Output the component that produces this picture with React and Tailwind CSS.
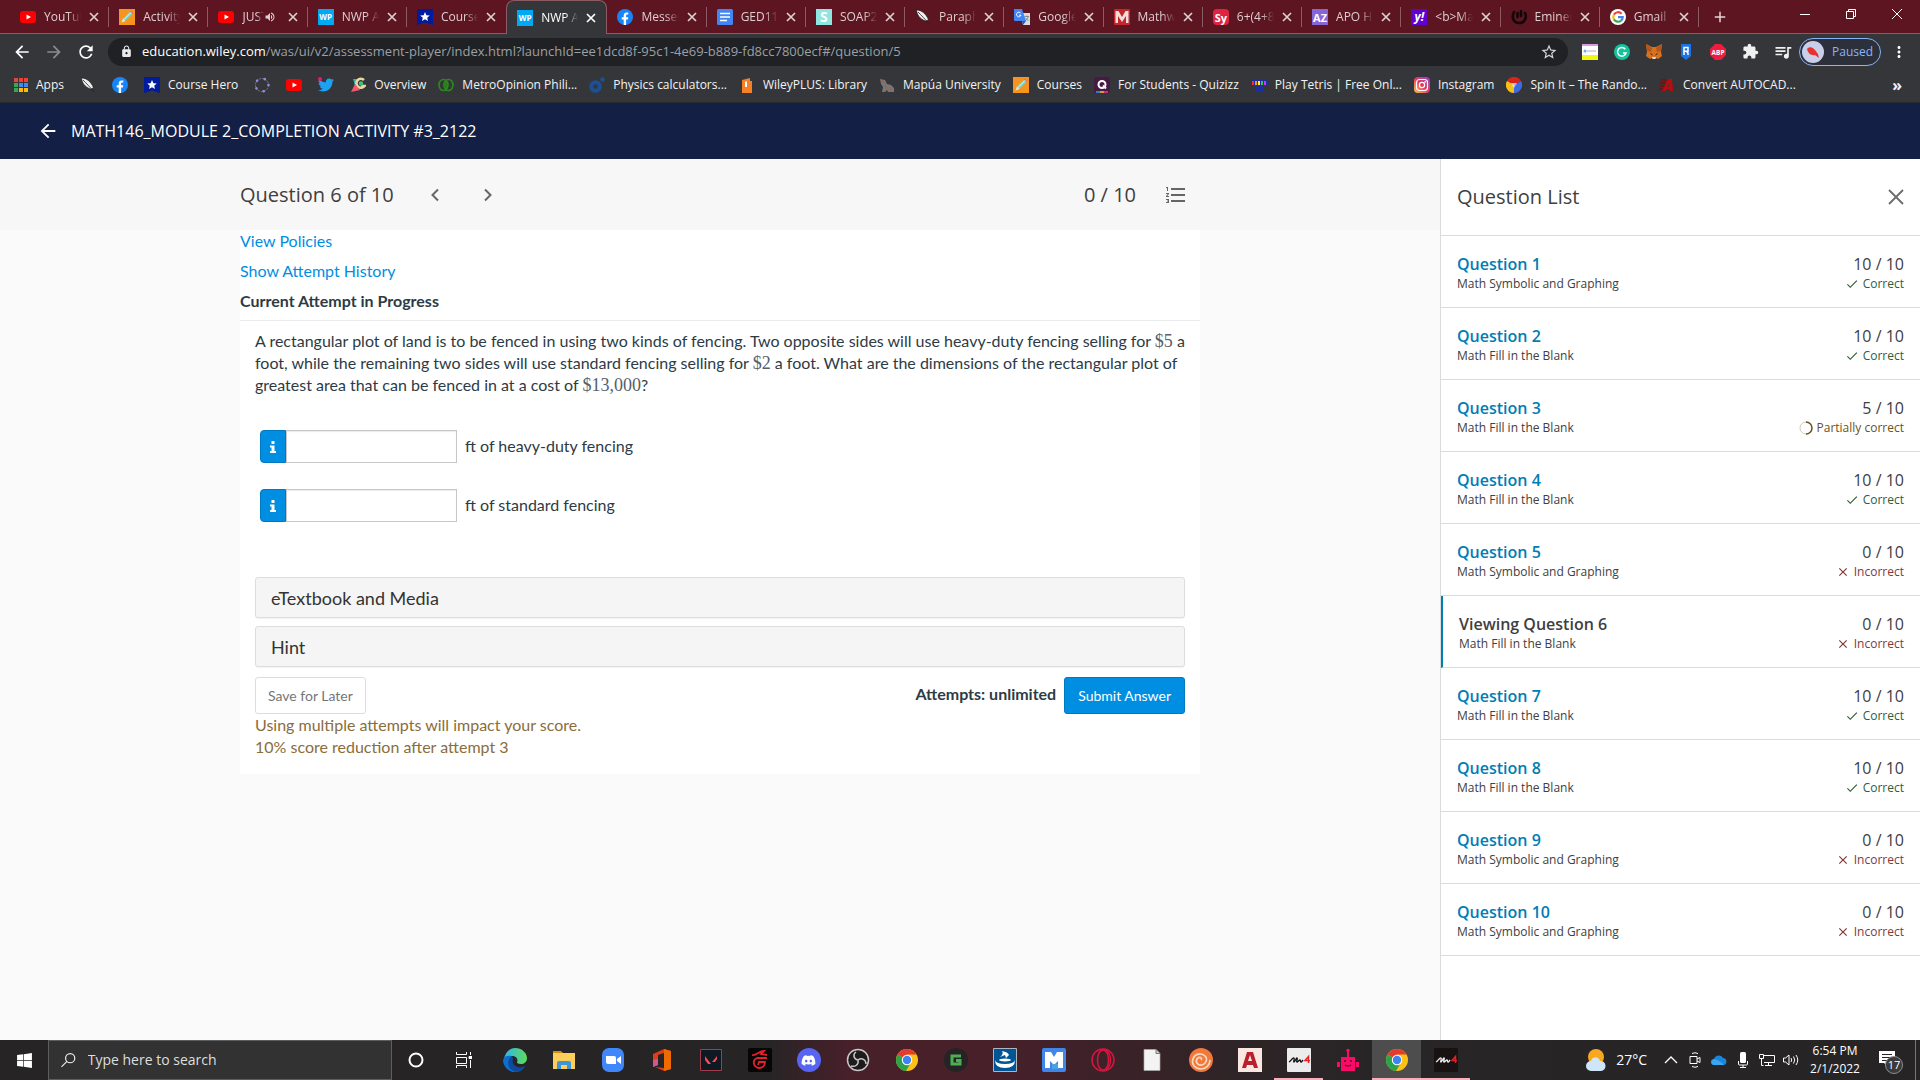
import clsx from 'clsx'
import {
  MdArrowBack, MdArrowForward, MdRefresh, MdLock, MdStarOutline, MdExtension, MdQueueMusic,
  MdMoreVert, MdClose, MdAdd, MdVolumeUp, MdFormatListNumbered, MdCheck, MdMic,
} from 'react-icons/md'
import { FaTwitter, FaDiscord, FaWindows } from 'react-icons/fa'

/* ---------- site logos ---------- */

function Tile({ className, children }) {
  return (
    <span className={clsx('w-4 h-4 flex items-center justify-center leading-none font-bold flex-shrink-0', className)}>
      {children}
    </span>
  )
}

const YouTube = () => (
  <svg viewBox="0 0 16 16" className="w-4 h-4 flex-shrink-0">
    <rect y="2" width="16" height="12" rx="3" fill="#f00" />
    <path d="M6.500 5.500 11 8l-4.500 2.500z" fill="#fff" />
  </svg>
)

const Pencil = () => (
  <svg viewBox="0 0 16 16" className="w-4 h-4 flex-shrink-0">
    <rect width="16" height="16" fill="#f7941d" />
    <path d="M2.500 13.500 4 9.500 11 2.500l2.500 2.500-7 7z" fill="#6fd6cf" />
    <path d="m11 2.500 1-1 2.500 2.500-1 1z" fill="#f4667f" />
    <path d="M2.500 13.500 4 9.500l2.500 2.500z" fill="#fbe3b5" />
    <path d="m5 10.500 7-7" stroke="#d7fbf3" />
  </svg>
)

const CourseHero = () => (
  <svg viewBox="0 0 16 16" className="w-4 h-4 flex-shrink-0">
    <path d="M0 0h16v16l-8-2.500L0 16z" fill="#001c9c" />
    <path d="m8 3 1.400 3.200 3.400.3-2.600 2.200.8 3.300L8 10.200 5 12l.8-3.300-2.600-2.200 3.400-.3z" fill="#fff" />
  </svg>
)

const Facebook = () => (
  <svg viewBox="0 0 16 16" className="w-4 h-4 flex-shrink-0">
    <circle cx="8" cy="8" r="8" fill="#1785f8" />
    <path d="M6.700 16v-5.500h-2V8.200h2V6.500c0-2 1.200-3.100 3-3.100.8 0 1.600.1 1.600.1v1.900h-1c-1 0-1.200.6-1.200 1.200v1.600h2.200l-.4 2.300H9.100V16z" fill="#fff" />
  </svg>
)

const Docs = () => (
  <svg viewBox="0 0 16 16" className="w-4 h-4 flex-shrink-0">
    <rect width="16" height="16" rx="1.500" fill="#4285f4" />
    <path d="M3 4.500h10M3 8h10M3 11.500h7" stroke="#fff" strokeWidth="1.600" />
  </svg>
)

const Quill = () => (
  <svg viewBox="0 0 16 16" className="w-4 h-4 flex-shrink-0">
    <path d="M1.500 1c5 0 10 4 12 10l-3 1C5 10 2 6 1.500 1z" fill="#f0f0f0" stroke="#111" strokeWidth=".6" />
    <path d="M3 3c3 3 7 7 11 12" stroke="#222" strokeWidth=".8" fill="none" />
  </svg>
)

const Translate = () => (
  <svg viewBox="0 0 16 16" className="w-4 h-4 flex-shrink-0">
    <path d="M6 4h10v12H9z" fill="#dcdcdc" />
    <path d="M0 0h8l4 12H1a1 1 0 0 1-1-1z" fill="#4285f4" />
    <path d="m8 12 4 0-3 4z" fill="#2a56c6" />
    <path d="M6.800 4.300A2.300 2.300 0 1 0 7 6.200H5" stroke="#fff" fill="none" />
    <path d="M10.500 7.500H15M13 6.500v1M14 8c-.5 2-1.500 3-3 4M11.500 9l3 3" stroke="#607d8b" strokeWidth=".8" fill="none" />
  </svg>
)

const Mathway = () => (
  <svg viewBox="0 0 16 16" className="w-4 h-4 flex-shrink-0">
    <rect width="16" height="16" rx="1" fill="#c4262c" />
    <path d="M1.500 14V2h3L8 8l3.500-6h3v12H12V7l-4 6-4-6v7z" fill="#f3dcdc" />
  </svg>
)

const Eminem = () => (
  <svg viewBox="0 0 16 16" className="w-4 h-4 flex-shrink-0">
    <path d="M3 3c-3 6 0 11 5 11 6 0 8-6 6-10M6.500 4v4M10 2v5" stroke="#120506" strokeWidth="2.600" fill="none" strokeLinecap="round" />
  </svg>
)

const Google = () => (
  <svg viewBox="0 0 16 16" className="w-4 h-4 flex-shrink-0">
    <circle cx="8" cy="8" r="8" fill="#fff" />
    <g fill="none" strokeWidth="2.200">
      <path d="M11.600 4.800A4.800 4.800 0 0 0 3.900 5.600" stroke="#ea4335" />
      <path d="M3.900 5.600a4.800 4.800 0 0 0 0 4.800" stroke="#fbbc05" />
      <path d="M3.900 10.400a4.800 4.800 0 0 0 7.200 1.200" stroke="#34a853" />
      <path d="M11.100 11.600A4.800 4.800 0 0 0 12.700 8.200H8" stroke="#4285f4" />
    </g>
  </svg>
)

const Apps = () => (
  <svg viewBox="0 0 14 14" className="w-[14px] h-[14px] flex-shrink-0">
    <path d="M0 0h4v4H0zM5 0h4v4H5zM10 0h4v4h-4z" fill="#ea4335" />
    <path d="M0 5h4v4H0zM0 10h4v4H0z" fill="#34a853" />
    <path d="M5 5h4v4H5zM10 5h4v4h-4z" fill="#4285f4" />
    <path d="M5 10h4v4H5zM10 10h4v4h-4z" fill="#fbbc05" />
  </svg>
)

const Dotted = () => (
  <svg viewBox="0 0 16 16" className="w-4 h-4 flex-shrink-0">
    <circle cx="8" cy="8" r="6.500" fill="none" stroke="#777" strokeWidth="1" strokeDasharray="2 1" />
    <circle cx="8" cy="8" r="6.500" fill="none" stroke="#8c8cf5" strokeWidth="2.600" strokeLinecap="round" strokeDasharray="0.100 8.070" />
  </svg>
)

const Twitter = () => (
  <span className="relative w-4 h-4 flex-shrink-0">
    <FaTwitter size={16} className="text-[#1da1f2]" />
    <span className="absolute left-0 top-0 w-1 h-1 rounded-full bg-[#f0146e]" />
  </span>
)

const Overview = () => (
  <svg viewBox="0 0 16 16" className="w-4 h-4 flex-shrink-0">
    <path d="M3 2h6L5 9z" fill="#2fb5a0" />
    <path d="M14 3a4.500 4.500 0 1 0 .5 6H11" fill="none" stroke="#e9d9a0" strokeWidth="2.600" />
    <path d="M1 15 5 7l5 6z" fill="#ef5a6c" />
    <circle cx="11" cy="6.500" r="2.200" fill="#3cc27e" />
  </svg>
)

const Metro = () => (
  <svg viewBox="0 0 16 16" className="w-4 h-4 flex-shrink-0" fill="none" stroke="#2c8a1c" strokeWidth="1.600">
    <ellipse cx="5.500" cy="8" rx="4.500" ry="5.500" />
    <ellipse cx="10.500" cy="8" rx="4.500" ry="5.500" />
    <path d="M8 4v8" />
  </svg>
)

const Physics = () => (
  <svg viewBox="0 0 16 16" className="w-4 h-4 flex-shrink-0">
    <circle cx="6.500" cy="9.500" r="4.300" fill="none" stroke="#1c4f94" strokeWidth="4" />
    <circle cx="13.500" cy="2.500" r="2.300" fill="#1c4f94" />
  </svg>
)

const Wiley = () => (
  <svg viewBox="0 0 16 16" className="w-4 h-4 flex-shrink-0">
    <path d="M3 3 11 1v3h2v12H3z" fill="#f58025" />
    <path d="M6 4.500h2V10H6z" fill="#fff" />
  </svg>
)

const Mapua = () => (
  <svg viewBox="0 0 16 16" className="w-4 h-4 flex-shrink-0">
    <path d="M1 2l5 1 2 4 4 1 3 3v4H9l-1-2-2 2H3l1-5-2-3z" fill="#777" />
    <path d="M3 3l2 3M6 8l3 5M11 10l2 4" stroke="#b8543a" />
  </svg>
)

const Quizizz = () => (
  <svg viewBox="0 0 16 16" className="w-4 h-4 flex-shrink-0">
    <rect width="16" height="16" rx="2" fill="#461a42" />
    <path d="M2 15h4" stroke="#2f9dff" strokeWidth="1.500" />
    <path d="M6 15h4" stroke="#ffc43a" strokeWidth="1.500" />
    <path d="M10 15h4" stroke="#ec3b83" strokeWidth="1.500" />
    <circle cx="8" cy="7.500" r="3.500" fill="none" stroke="#fff" strokeWidth="2" />
    <path d="m9 8.500 3 3" stroke="#fff" strokeWidth="2" />
  </svg>
)

const Tetris = () => (
  <svg viewBox="0 0 16 16" className="w-4 h-4 flex-shrink-0">
    <path d="M0 3h16v6h-4v5H4V9H0z" fill="#1d2f9c" />
    <path d="M2 4v4" stroke="#e33" strokeWidth="2" />
    <path d="M5 4v4" stroke="#f90" strokeWidth="2" />
    <path d="M8 4v4" stroke="#fe3" strokeWidth="2" />
    <path d="M11 4v4" stroke="#3c3" strokeWidth="2" />
    <path d="M14 4v4" stroke="#c3f" strokeWidth="2" />
  </svg>
)

const Instagram = () => (
  <span className="w-4 h-4 rounded bg-gradient-to-tr from-[#fdc04a] via-[#e5335f] to-[#8a3ac8] flex-shrink-0">
    <svg viewBox="0 0 16 16" className="w-4 h-4" fill="none" stroke="#fff" strokeWidth="1.200">
      <rect x="2.500" y="2.500" width="11" height="11" rx="3" />
      <circle cx="8" cy="8" r="2.600" />
      <circle cx="11.200" cy="4.800" r=".3" />
    </svg>
  </span>
)

const Spin = () => (
  <svg viewBox="0 0 16 16" className="w-4 h-4 flex-shrink-0">
    <path d="M8 8 1 4a8 8 0 0 1 14 0z" fill="#d9241c" />
    <path d="M8 8 15 4a8 8 0 0 1-7 12z" fill="#3b6ce0" />
    <path d="M8 8v8A8 8 0 0 1 1 4z" fill="#f6bf1b" />
    <path d="M5 6h6l-3 5z" fill="#fff" opacity=".6" />
  </svg>
)

const Autocad = () => (
  <svg viewBox="0 0 16 16" className="w-4 h-4 flex-shrink-0">
    <path d="M2 3h6M1 6h6M1 9h5M0 12h4" stroke="#6d1414" strokeWidth="2" />
    <path d="m3 14 6-12h4l1 12h-3.500l-.2-2H7.500l-1 2zm5.500-4.500H10L9.900 6z" fill="#b80d0d" />
  </svg>
)

const WileyTab = () => <Tile className="bg-[#00a9f4] text-white text-[8px] font-['Open_Sans']">WP</Tile>

/* ---------- chrome data ---------- */

const TABS = [
  { title: 'YouTube', icon: <YouTube /> },
  { title: 'Activity', icon: <Pencil /> },
  { title: 'JUST', icon: <YouTube />, audio: true },
  { title: 'NWP As', icon: <WileyTab /> },
  { title: 'Course', icon: <CourseHero /> },
  { title: 'NWP As', icon: <WileyTab />, active: true },
  { title: 'Messen', icon: <Facebook /> },
  { title: 'GED117', icon: <Docs /> },
  { title: 'SOAP2', icon: <Tile className="bg-[#8fe6e1] text-white text-[14px]">S</Tile> },
  { title: 'Paraphr', icon: <Quill /> },
  { title: 'Google', icon: <Translate /> },
  { title: 'Mathwa', icon: <Mathway /> },
  { title: '6+(4+8', icon: <Tile className="bg-[#df2340] text-white text-[11px] rounded-sm">Sy</Tile> },
  { title: 'APO Ho', icon: <Tile className="bg-[#8765d8] text-white text-[11px]">AZ</Tile> },
  { title: '<b>Ma', icon: <Tile className="bg-[#5f01d1] text-white text-[12px] italic">y!</Tile> },
  { title: 'Eminem', icon: <Eminem /> },
  { title: 'Gmail', icon: <Google /> },
]

const BOOKMARKS = [
  { label: 'Apps', icon: <Apps /> },
  { icon: <Quill /> },
  { icon: <Facebook /> },
  { label: 'Course Hero', icon: <CourseHero /> },
  { icon: <Dotted /> },
  { icon: <YouTube /> },
  { icon: <Twitter /> },
  { label: 'Overview', icon: <Overview /> },
]

const MORE_BOOKMARKS = [
  { label: 'MetroOpinion Phili...', icon: <Metro /> },
  { label: 'Physics calculators...', icon: <Physics /> },
  { label: 'WileyPLUS: Library', icon: <Wiley /> },
  { label: 'Mapúa University', icon: <Mapua /> },
  { label: 'Courses', icon: <Pencil /> },
  { label: 'For Students - Quizizz', icon: <Quizizz /> },
  { label: 'Play Tetris | Free Onl...', icon: <Tetris /> },
  { label: 'Instagram', icon: <Instagram /> },
  { label: 'Spin It – The Rando...', icon: <Spin /> },
  { label: 'Convert AUTOCAD...', icon: <Autocad /> },
]

function TabStrip() {
  return (
    <div className="h-[34px] bg-[#5d1621] flex border-b border-[#8d5b62] pl-[10px] pr-3">
      <div className="flex-1 flex min-w-0">
        {TABS.map((tab, i) => (
          <div
            key={i}
            className={clsx(
              'flex-1 min-w-0 h-[34px] flex items-center px-[10px] relative',
              tab.active && 'bg-[#35363a] rounded-t-lg border border-b-0 border-[#8d5b62]',
            )}
          >
            {tab.icon}
            <span
              className={clsx(
                'ml-2 flex-1 min-w-0 overflow-hidden whitespace-nowrap text-xs [mask-image:linear-gradient(to_right,#000_65%,transparent)]',
                tab.active ? 'text-white' : 'text-[#dfcfd1]',
              )}
            >
              {tab.title}
            </span>
            {tab.audio && <MdVolumeUp size={12} className="mr-1 text-[#dfcfd1] flex-shrink-0" />}
            <button aria-label="Close tab" className={clsx('ml-2 flex-shrink-0', tab.active ? 'text-white' : 'text-[#dfcfd1]')}>
              <svg viewBox="0 0 10 10" className="w-[10px] h-[10px]">
                <path d="m1 1 8 8M9 1 1 9" stroke="currentColor" strokeWidth="1.700" />
              </svg>
            </button>
            {!tab.active && i !== 4 && <span className="absolute right-0 top-[7px] h-5 w-px bg-[#8d5b62]" />}
          </div>
        ))}
      </div>
      <button aria-label="New tab" className="w-[42px] flex items-center justify-center text-[#e3d3d5]"><MdAdd size={18} /></button>
      <div className="w-[167px] flex items-center justify-end gap-9 text-white h-7 pr-[6px]">
        <button aria-label="Minimize">
          <svg viewBox="0 0 10 10" className="w-[10px] h-[10px]"><path d="M0 5.500h10" stroke="currentColor" /></svg>
        </button>
        <button aria-label="Restore">
          <svg viewBox="0 0 10 10" className="w-[10px] h-[10px]" fill="none" stroke="currentColor">
            <path d="M.5 2.500h7v7h-7zM2.500 2.500v-2h7v7h-2" />
          </svg>
        </button>
        <button aria-label="Close window">
          <svg viewBox="0 0 10 10" className="w-[10px] h-[10px]"><path d="m0 0 10 10M10 0 0 10" stroke="currentColor" /></svg>
        </button>
      </div>
    </div>
  )
}

function Extensions() {
  return (
    <div className="flex items-center gap-4">
      <svg viewBox="0 0 16 16" className="w-4 h-4">
        <path d="M0 0h16v16H0z" fill="#fff" />
        <path d="M0 0h16v2H0z" fill="#d79be0" />
        <path d="M0 11h16v5H0z" fill="#f3f514" />
        <circle cx="3" cy="7" r="1.500" fill="#7aa7e8" />
        <path d="M5 7h9" stroke="#aac" />
      </svg>
      <svg viewBox="0 0 16 16" className="w-4 h-4">
        <circle cx="8" cy="8" r="8" fill="#15c39a" />
        <path d="M11.300 5.200A4.300 4.300 0 1 0 12 9H9" fill="none" stroke="#fff" strokeWidth="1.500" />
      </svg>
      <svg viewBox="0 0 16 16" className="w-4 h-4">
        <path d="m0 0 6 3h4l6-3-1 8 1 4-4 3-2-1H6l-2 1-4-3 1-4z" fill="#d9701d" />
        <path d="m0 0 6 4-1 4-4-1zM16 0l-6 4 1 4 4-1z" fill="#b5571a" />
        <path d="M6 13h4l-.5 2h-3z" fill="#e8d8c8" />
        <path d="M4.500 9.500 6.500 11M11.500 9.500l-2 1.500" stroke="#222" />
      </svg>
      <svg viewBox="0 0 16 16" className="w-4 h-4">
        <path d="M3 0h10v12l-5 4-5-4z" fill="#1a73e8" />
        <path d="M6 11V3.500h4v3.700H6M8.500 7.500 10 9v2" fill="none" stroke="#fff" strokeWidth="1.500" />
      </svg>
      <svg viewBox="0 0 16 16" className="w-4 h-4">
        <path d="M5 0h6l5 5v6l-5 5H5l-5-5V5z" fill="#ee1c3d" />
        <text x="8" y="10.500" textAnchor="middle" fontSize="6.500" fontWeight="700" fill="#fff" fontFamily="Open Sans">ABP</text>
      </svg>
      <MdExtension size={17} className="text-[#f1f1f1]" />
      <MdQueueMusic size={20} className="text-[#f1f1f1] -mx-0.5" />
    </div>
  )
}

function Toolbar() {
  return (
    <div className="h-[35px] bg-[#35363a] flex items-center px-3 text-white">
      <div className="flex items-center gap-3 mr-3">
        <button aria-label="Back"><MdArrowBack size={20} /></button>
        <button aria-label="Forward" className="text-[#8b8c8f]"><MdArrowForward size={20} /></button>
        <button aria-label="Reload"><MdRefresh size={20} /></button>
      </div>
      <div className="flex-1 h-7 rounded-full bg-[#202124] flex items-center pl-3 pr-[10px] text-[13px]">
        <MdLock size={13} className="text-[#e8eaed] flex-shrink-0" />
        <span className="ml-[9px] text-white">education.wiley.com</span>
        <span className="text-[#9aa0a6] flex-1 whitespace-nowrap">
          /was/ui/v2/assessment-player/index.html?launchId=ee1dcd8f-95c1-4e69-b889-fd8cc7800ecf#/question/5
        </span>
        <button aria-label="Bookmark this tab" className="text-[#d5d6d8]"><MdStarOutline size={18} /></button>
      </div>
      <div className="ml-[14px] mr-2"><Extensions /></div>
      <button className="w-[82px] h-7 rounded-full border border-[#8ab4f8] bg-[#2b303b] flex items-center pl-px text-xs text-[#8ab4f8]">
        <svg viewBox="0 0 22 22" className="w-[22px] h-[22px] mr-2 ml-px">
          <circle cx="11" cy="11" r="11" fill="#c9cfe8" />
          <path d="M5 8c2-3 6-2 8 1l3 4 1 4-4-3c-4 1-7-2-8-6z" fill="#e5322e" />
        </svg>
        Paused
      </button>
      <button aria-label="Menu" className="ml-[9px]"><MdMoreVert size={18} /></button>
    </div>
  )
}

function BookmarkLink({ icon, label }) {
  return (
    <a href="#" aria-label={label || 'Bookmark'} className="flex items-center gap-2 whitespace-nowrap">
      {icon}
      {label}
    </a>
  )
}

function BookmarksBar() {
  return (
    <div className="h-[34px] bg-[#35363a] border-b border-[#28292c] flex items-center pl-[14px] pr-[18px] pb-[2px] text-xs text-[#f1f3f4]">
      <div className="flex items-center gap-4">
        {BOOKMARKS.map((b, i) => <BookmarkLink key={i} {...b} />)}
      </div>
      <div className="flex items-center gap-3 ml-3 flex-1 min-w-0">
        {MORE_BOOKMARKS.map((b) => <BookmarkLink key={b.label} {...b} />)}
      </div>
      <button aria-label="More bookmarks" className="font-bold text-base leading-none">»</button>
    </div>
  )
}

/* ---------- assessment page ---------- */

const QUESTIONS = [
  { n: 1, type: 'Math Symbolic and Graphing', score: 10, status: 'correct' },
  { n: 2, type: 'Math Fill in the Blank', score: 10, status: 'correct' },
  { n: 3, type: 'Math Fill in the Blank', score: 5, status: 'partial' },
  { n: 4, type: 'Math Fill in the Blank', score: 10, status: 'correct' },
  { n: 5, type: 'Math Symbolic and Graphing', score: 0, status: 'incorrect' },
  { n: 6, type: 'Math Fill in the Blank', score: 0, status: 'incorrect', viewing: true },
  { n: 7, type: 'Math Fill in the Blank', score: 10, status: 'correct' },
  { n: 8, type: 'Math Fill in the Blank', score: 10, status: 'correct' },
  { n: 9, type: 'Math Symbolic and Graphing', score: 0, status: 'incorrect' },
  { n: 10, type: 'Math Symbolic and Graphing', score: 0, status: 'incorrect' },
]

function Status({ status }) {
  if (status === 'correct') {
    return (
      <span className="flex items-center gap-1 text-[#2f5e35]"><MdCheck size={14} />Correct</span>
    )
  }
  if (status === 'partial') {
    return (
      <span className="flex items-center gap-1 text-[#6b5320]">
        <svg viewBox="0 0 14 14" className="w-[14px] h-[14px]" fill="none">
          <circle cx="7" cy="7" r="6" stroke="#d0cabb" />
          <path d="M7 1a6 6 0 0 1 0 12" stroke="#6b5320" strokeWidth="1.500" />
        </svg>
        Partially correct
      </span>
    )
  }
  return (
    <span className="flex items-center gap-1 text-[#84373a]"><MdClose size={14} />Incorrect</span>
  )
}

function QuestionList() {
  return (
    <aside className="w-[480px] flex-shrink-0 bg-white border-l border-[#d9dbdc] text-[#404040]">
      <div className="h-[77px] pl-4 pr-[14px] flex items-center justify-between border-b border-[#d9dbdc]">
        <h2 className="text-xl">Question List</h2>
        <button aria-label="Close question list">
          <svg viewBox="0 0 20 20" className="w-5 h-5"><path d="m3 3 14 14M17 3 3 17" stroke="#6b6b6b" strokeWidth="1.800" /></svg>
        </button>
      </div>
      <ul>
        {QUESTIONS.map((q) => (
          <li
            key={q.n}
            className={clsx(
              'h-[72px] border-b border-b-[#d9dbdc] px-4 pt-1 flex items-center justify-between',
              q.viewing && 'border-l-2 border-l-[#007db5]',
            )}
          >
            <div>
              {q.viewing ? (
                <p className="text-base leading-5 font-semibold">Viewing Question {q.n}</p>
              ) : (
                <a href="#" className="block text-base leading-5 font-semibold text-[#007db5]">Question {q.n}</a>
              )}
              <p className="text-xs leading-5">{q.type}</p>
            </div>
            <div className="flex flex-col items-end">
              <p className="text-base leading-5">{q.score} / 10</p>
              <div className="text-xs leading-5"><Status status={q.status} /></div>
            </div>
          </li>
        ))}
      </ul>
    </aside>
  )
}

function Chevron({ d }) {
  return (
    <svg viewBox="0 0 16 16" className="w-4 h-4" fill="none" stroke="#666" strokeWidth="2"><path d={d} /></svg>
  )
}

function AnswerRow({ id, label }) {
  return (
    <div className="flex items-center h-[33px]">
      <button aria-label="Info" className="w-[26px] h-[33px] bg-[#008ee2] border border-[#0079c1] rounded-l-sm flex items-center justify-center">
        <svg viewBox="0 0 6 12" className="w-[6px] h-3" fill="#fff"><path d="M1.500 0h3v3h-3zM0 4.500h4.500V10H6v2H0v-2h1.500V6.500H0z" /></svg>
      </button>
      <input id={id} type="text" className="w-[171px] h-[33px] bg-white border border-[#c7c7c7] shadow-[inset_0_1px_1px_rgba(0,0,0,0.08)] px-2 outline-none" />
      <label htmlFor={id} className="ml-2 pb-[2px]">{label}</label>
    </div>
  )
}

function Money({ children }) {
  return <span className="font-['Liberation_Serif',serif] text-[18px] leading-none text-[#55606a]">{children}</span>
}

function Question() {
  return (
    <main className="flex-1 min-w-0 bg-[#fafafa]">
      <div className="h-[71px] bg-[#f7f7f7] text-[#404040]">
        <div className="max-w-[960px] mx-auto h-[71px] flex items-center text-xl">
          <h2>Question 6 of 10</h2>
          <button aria-label="Previous question" className="ml-[34px]"><Chevron d="M10 2.500 4.500 8l5.500 5.500" /></button>
          <button aria-label="Next question" className="ml-9"><Chevron d="M5 2.500 10.500 8 5 13.500" /></button>
          <p className="ml-auto">0 / 10</p>
          <button aria-label="Question list" className="ml-7 mr-3 text-[#666]"><MdFormatListNumbered size={24} /></button>
        </div>
      </div>

      <div className="max-w-[960px] mx-auto bg-white pb-[10px] font-['Lato',sans-serif] text-base leading-[22px] text-[#2d3b45]">
        <div className="flex flex-col items-start gap-2 pb-2 border-b border-[#e9ebec]">
          <a href="#" className="text-[#008ee2]">View Policies</a>
          <a href="#" className="text-[#008ee2]">Show Attempt History</a>
          <h3 className="font-bold">Current Attempt in Progress</h3>
        </div>

        <div className="px-[15px]">
          <p className="pt-[9px] -mr-3">
            A rectangular plot of land is to be fenced in using two kinds of fencing. Two opposite sides will use
            heavy-duty fencing selling for <Money>$5</Money> a foot, while the remaining two sides will use standard
            fencing selling for <Money>$2</Money> a foot. What are the dimensions of the rectangular plot of greatest
            area that can be fenced in at a cost of <Money>$13,000</Money>?
          </p>

          <div className="mt-[34px] ml-[5px] flex flex-col gap-[26px]">
            <AnswerRow id="heavy" label="ft of heavy-duty fencing" />
            <AnswerRow id="standard" label="ft of standard fencing" />
          </div>

          <div className="mt-[55px] flex flex-col gap-2 text-lg text-[#333]">
            {['eTextbook and Media', 'Hint'].map((label) => (
              <button key={label} className="h-[41px] px-[15px] text-left bg-[#f5f5f5] border border-[#ddd] rounded-[3px] shadow-[0_1px_1px_rgba(0,0,0,0.05)]">
                {label}
              </button>
            ))}
          </div>

          <div className="mt-[10px] flex justify-between">
            <button className="h-[37px] px-3 border border-[#ddd] rounded-[3px] bg-white text-sm text-[#767676]">Save for Later</button>
            <div className="flex gap-2">
              <p className="font-bold pt-[6px]">Attempts: unlimited</p>
              <button className="h-[37px] px-[13px] border border-[#0079c1] rounded-[3px] bg-[#008ee2] text-sm text-white">Submit Answer</button>
            </div>
          </div>
          <p className="text-[#8a6d3b] pb-[6px]">
            Using multiple attempts will impact your score.
            <br />
            10% score reduction after attempt 3
          </p>
        </div>
      </div>
    </main>
  )
}

/* ---------- taskbar ---------- */

const Chrome = () => (
  <svg viewBox="0 0 24 24" className="w-6 h-6">
    <circle cx="12" cy="12" r="11" fill="#fbc116" />
    <path d="M12 12 2.500 6.500A11 11 0 0 1 21.500 6.500H12z" fill="#e33b2e" />
    <path d="M2.500 6.500A11 11 0 0 0 11 23l5-8.500-4-2.500z" fill="#2ba24c" />
    <circle cx="12" cy="12" r="5.200" fill="#fff" />
    <circle cx="12" cy="12" r="4.200" fill="#3f83f2" />
  </svg>
)

const Mir4 = ({ dark }) => (
  <svg viewBox="0 0 24 24" className="w-6 h-6">
    <rect width="24" height="24" rx="1" fill={dark ? '#181213' : '#ececec'} />
    <path d="M2 14c2-1 4-5 5-4s-1 4 0 4 2-4 3-4-1 4 0 4 2-2 3-2 0 2 1 2 1-1 2-2" stroke={dark ? '#eee' : '#111'} strokeWidth="1.300" fill="none" />
    <path d="M21.500 15V8.500l-3.500 4h5" stroke="#e6202a" strokeWidth="1.500" fill="none" />
  </svg>
)

const APPS = [
  <svg viewBox="0 0 24 24" className="w-6 h-6">
    <defs>
      <linearGradient id="edge" x1="0" y1="0" x2="1" y2="0"><stop offset="0" stopColor="#2fb4ee" /><stop offset="1" stopColor="#5ddb5a" /></linearGradient>
    </defs>
    <path d="M1 11C2 4 7 0 12 0c7 0 12 5 12 10 0 4-3 6-6 6-3 0-4-1-4-2 1-1 1-6-5-6-4 0-7 1-8 3z" fill="url(#edge)" />
    <path d="M0 12c1-4 5-5 9-4-4 3-3 12 4 13 4 1 7-1 9-3-2 4-6 6-10 6C5 24 0 18 0 12z" fill="#0c6ed1" />
    <path d="M9 8c-6 4-5 14 4 16 4-1 7-3 9-6-8 4-14-2-12-7z" fill="#0b4a9e" />
  </svg>,
  <svg viewBox="0 0 24 24" className="w-6 h-6">
    <path d="M1 3h8l2 2H1z" fill="#d88c0a" />
    <path d="M1 5h22v16H1z" fill="#fbcf5a" />
    <path d="M5 21v-6q0-2 2-2h10q2 0 2 2v6h-4v-4H9v4z" fill="#3b95d8" />
  </svg>,
  <svg viewBox="0 0 24 24" className="w-6 h-6">
    <rect x="1" width="22" height="24" rx="7" fill="#4087fc" />
    <path d="M5 8h8a2 2 0 0 1 2 2v6H7a2 2 0 0 1-2-2zM16 11l4-3v8l-4-3z" fill="#fff" />
  </svg>,
  <svg viewBox="0 0 24 24" className="w-6 h-6">
    <path d="M3 6 14 1l7 2v18l-7 2-9-4 9 1V5L8 7v10l-5 2z" fill="#dc3e1c" />
    <path d="m14 1 7 2v18l-7 2z" fill="#ef6a00" />
    <path d="M3 12l5-1v6l-5 2z" fill="#d3568e" />
  </svg>,
  <svg viewBox="0 0 24 24" className="w-6 h-6">
    <path d="M1.500 1.500h21v21h-21z" fill="#0f1923" stroke="#a33c46" />
    <path d="m6 8 6 8h-3l-3-4zM18 8l-5 6h3l2-3z" fill="#ff4655" />
  </svg>,
  <svg viewBox="0 0 24 24" className="w-6 h-6">
    <rect width="24" height="24" rx="2" fill="#060606" />
    <path d="M4 7c4 1 7-4 12-4l-3 3 6 1M19 10H9c-5 2-4 9 2 10 4 0 6-3 6-6h-6l-1 3" fill="none" stroke="#e5202b" strokeWidth="1.800" />
  </svg>,
  <span className="w-6 h-6 rounded-full bg-[#5865f2] flex items-center justify-center text-white"><FaDiscord size={15} /></span>,
  <svg viewBox="0 0 24 24" className="w-6 h-6" fill="none">
    <circle cx="12" cy="12" r="10.500" fill="#1d1b1c" stroke="#c9c6c6" strokeWidth="1.500" />
    <path d="M12 12c-5-1-5-6-2-8M12 12c4-3 8 0 8 4M12 12c1 5-3 7-7 6" stroke="#c9c6c6" strokeWidth="1.500" />
  </svg>,
  <Chrome />,
  <svg viewBox="0 0 24 24" className="w-6 h-6">
    <circle cx="12" cy="12" r="12" fill="#252324" />
    <path d="M17 8H8v8h8v-3.500h-4" fill="none" stroke="#4caf50" strokeWidth="3" />
  </svg>,
  <svg viewBox="0 0 24 24" className="w-6 h-6">
    <path d="M.5.500h23v23H.5z" fill="#005596" stroke="#aeb7be" />
    <path d="M9 3q6 1 7 4l-3 3-1-3-5 2q4-3 2-6z" fill="#fff" />
    <path d="M2 12q1 4 10 4t10-4q0 8-10 8T2 12z" fill="#fff" />
    <ellipse cx="12" cy="12" rx="6" ry="1.500" fill="#fff" />
  </svg>,
  <svg viewBox="0 0 24 24" className="w-6 h-6">
    <rect width="24" height="24" rx="2" fill="#3f86e8" />
    <path d="M3 20V4h6l3 5 3-5h6v16h-5v-7l-4 4-4-4v7z" fill="#fff" />
    <path d="M10 16h6v5h-6z" fill="#47a3e4" />
  </svg>,
  <svg viewBox="0 0 24 24" className="w-6 h-6" fill="none" stroke="#d9143f" strokeWidth="1.500">
    <circle cx="12" cy="12" r="11" />
    <ellipse cx="12" cy="12" rx="5.500" ry="10" />
    <path d="M15 2c6 5 6 15 0 20" />
  </svg>,
  <svg viewBox="0 0 24 24" className="w-6 h-6">
    <path d="M4 1.500h12l4 4v17H4z" fill="#f3f3f3" stroke="#aaa" strokeWidth=".7" />
    <path d="M16 1.500v4h4" fill="#ccc" stroke="#777" />
  </svg>,
  <svg viewBox="0 0 24 24" className="w-6 h-6" fill="none">
    <circle cx="12" cy="12" r="12" fill="#f0793b" />
    <path d="M12 12c2-2-2-4-4-1s1 7 5 6 6-6 3-9-10-3-12 3 3 10 8 10 9-4 9-9" stroke="#fbd8c2" strokeWidth="1.700" />
  </svg>,
  <svg viewBox="0 0 24 24" className="w-6 h-6">
    <path d="M0 0h24v24H0z" fill="#fbe7e2" />
    <path d="m4 20 5-16h6l5 16h-4l-1-3H9l-1 3zm6-7h4l-2-6z" fill="#b9202c" />
  </svg>,
  <Mir4 />,
  <svg viewBox="0 0 24 24" className="w-6 h-6" fill="#fb0a68">
    <path d="M11 3h2v6h-2zM5 9h14v14H5zM1 14h3v5H1zM20 14h3v5h-3z" />
    <circle cx="12" cy="2.500" r="1.700" />
    <path d="M8 13h2M14 13h2M9 17q3 2 6 0" stroke="#54112b" strokeWidth="1.500" fill="none" />
  </svg>,
  <Chrome />,
  <Mir4 dark />,
]

function Tray() {
  return (
    <div className="ml-auto flex items-center text-white">
      <svg viewBox="0 0 24 24" className="w-6 h-6">
        <circle cx="12" cy="9" r="8" fill="#f8a81c" />
        <path d="M7 23a5 5 0 0 1 0-10c1-5 8-5 9 0a5 5 0 0 1 1 10z" fill="#cfe6fa" />
      </svg>
      <span className="ml-2 text-sm">27°C</span>
      <div className="flex items-center gap-2 ml-4">
        <svg viewBox="0 0 16 16" className="w-4 h-4" fill="none" stroke="currentColor" strokeWidth="1.300"><path d="m2 11 6-6 6 6" /></svg>
        <svg viewBox="0 0 16 16" className="w-4 h-4" fill="none" stroke="currentColor"><path d="M3 4.500h7v7H3zM10 7l3-1.500v5L10 9M5 1.500q3-1.500 6 0M5 14.500q3 1.500 6 0" /></svg>
        <svg viewBox="0 0 16 16" className="w-4 h-4"><path d="M3 13a3 3 0 0 1 0-6c1-4 7-5 9-1a3.600 3.600 0 0 1 1 7z" fill="#1b85dc" /><path d="M1 8c3-2 7 0 12 5H3c-3 0-3-4-2-5z" fill="#38a7f0" /></svg>
        <svg viewBox="0 0 16 16" className="w-4 h-4"><rect x="5" y="0" width="6" height="11" rx="1.500" fill="#fff" /><path d="M3.500 9v3q0 1 1 1h7q1 0 1-1V9M8 13v2.500M5 15.500h6" fill="none" stroke="#fff" /></svg>
        <svg viewBox="0 0 16 16" className="w-4 h-4" fill="none" stroke="currentColor"><path d="M5 3.500h10.500v7H5M9.500 10.500v3M6 13.500h7M.5 2.500h4v4h-4zM2.500 6.500v7h2" /></svg>
        <svg viewBox="0 0 16 16" className="w-4 h-4" fill="none" stroke="currentColor"><path d="M.5 6h2L6 3v10L2.500 10h-2zM8 6q1.500 2 0 4M10.500 4.500q2.500 3.500 0 7M13 3q3.500 5 0 10" /></svg>
      </div>
      <div className="ml-3 w-12 text-xs leading-[18px] whitespace-nowrap flex flex-col items-center">
        <span>6:54 PM</span>
        <span>2/1/2022</span>
      </div>
      <div className="relative ml-5 w-6 h-6">
        <svg viewBox="0 0 24 24" className="w-6 h-6"><path d="M0 3h16v12H8v3l-3-3H0z" fill="#fff" /><path d="M3 6.500h10M3 9.500h10M3 12.500h6" stroke="#262425" strokeWidth="1.200" /></svg>
        <span className="absolute left-[6px] top-2 w-[18px] h-[18px] rounded-full bg-[#3b3a3b] border border-[#8f8f8f] text-[11px] leading-4 text-center">17</span>
      </div>
      <span className="ml-3 mr-1 w-px h-10 bg-[#777]" />
    </div>
  )
}

function Taskbar() {
  return (
    <footer className="h-10 flex items-center bg-[linear-gradient(to_right,#262425_0%,#262425_40%,#47202a_44%,#47202a_52%,#2f2427_64%,#272526_72%,#262425_100%)] text-white">
      <button aria-label="Start" className="w-12 flex justify-center"><FaWindows size={17} /></button>
      <div className="w-[344px] h-10 bg-[#323232] border border-[#5e5e5e] flex items-center pl-3">
        <svg viewBox="0 0 16 16" className="w-4 h-4" fill="none" stroke="#eee" strokeWidth="1.300"><circle cx="10" cy="6" r="5" /><path d="M6.500 9.500.5 15.500" /></svg>
        <input aria-label="Search" placeholder="Type here to search" className="ml-3 w-full bg-transparent text-sm text-white placeholder-[#dedede] outline-none" />
      </div>
      <button aria-label="Cortana" className="w-12 flex justify-center">
        <svg viewBox="0 0 16 16" className="w-4 h-4" fill="none"><circle cx="8" cy="8" r="6.500" stroke="#fff" strokeWidth="2" /></svg>
      </button>
      <button aria-label="Task view" className="w-12 flex justify-center">
        <svg viewBox="0 0 16 16" className="w-4 h-4" fill="none" stroke="#fff"><path d="M.5 0v2.500h10V0M.5 5.500h10v6H.5zM.5 16v-2.500h10V16M14.500 0v3M14.500 8v8" /><path d="M13 4.500h3v2h-3z" fill="#fff" /></svg>
      </button>
      <div className="ml-[2px] flex">
        {APPS.map((icon, i) => (
          <button
            key={i}
            aria-label="App"
            className={clsx(
              'w-[49px] h-10 flex items-center justify-center border-b-2 pt-[2px]',
              i === 18 && 'bg-[#4d4d4d]',
              [16, 18, 19].includes(i) ? 'border-[#f9aebc]' : 'border-transparent',
            )}
          >
            {icon}
          </button>
        ))}
      </div>
      <Tray />
    </footer>
  )
}

export default function App() {
  return (
    <div className="min-h-screen flex flex-col font-['Open_Sans',sans-serif]">
      <TabStrip />
      <Toolbar />
      <BookmarksBar />
      <header className="h-14 bg-[#131f44] flex items-center pl-[37px] gap-3 text-white">
        <button aria-label="Back"><MdArrowBack size={22} /></button>
        <h1 className="text-base font-medium">MATH146_MODULE 2_COMPLETION ACTIVITY #3_2122</h1>
      </header>
      <div className="flex-1 flex">
        <Question />
        <QuestionList />
      </div>
      <Taskbar />
    </div>
  )
}
